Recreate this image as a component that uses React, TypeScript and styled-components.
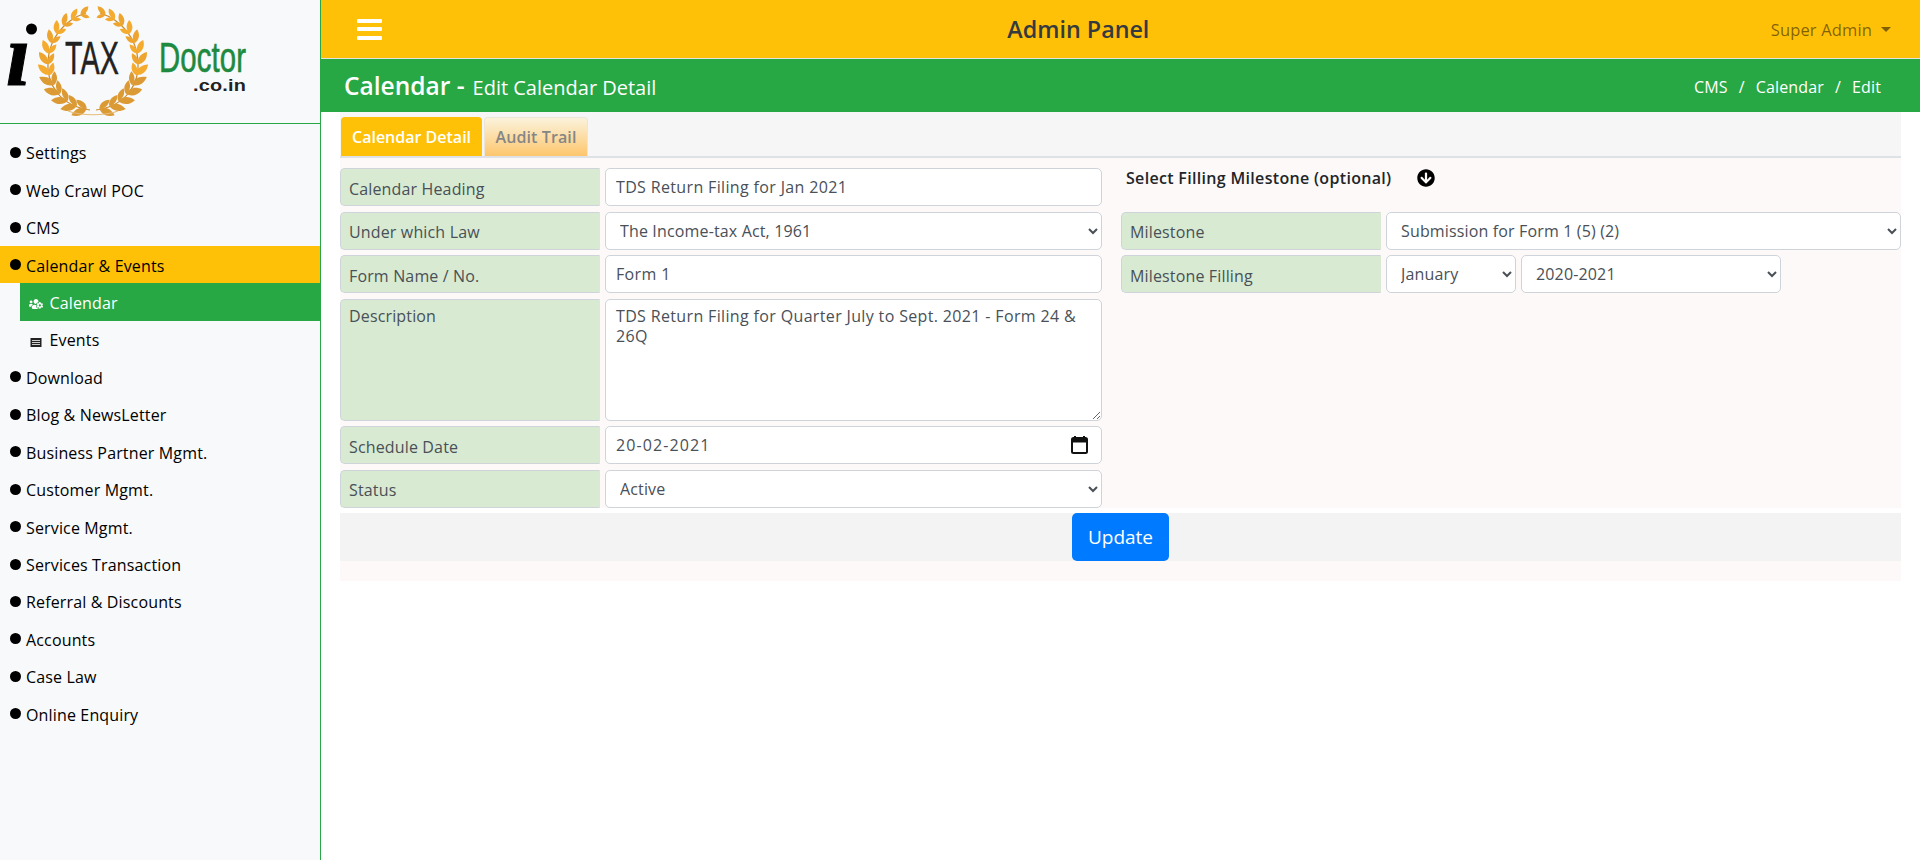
import React from 'react';
import styled, { createGlobalStyle } from 'styled-components';
import { FaArrowCircleDown, FaUsersCog } from 'react-icons/fa';

const FONT = `'Open Sans', 'Noto Sans', 'Liberation Sans', sans-serif`;

const GlobalStyle = createGlobalStyle`
  * { box-sizing: border-box; }
  html, body { margin: 0; background: #fff; }
  body { font-family: ${FONT}; font-size: 16px; letter-spacing: 0.15px; color: #212529; }
  input, select, textarea, button { font-family: ${FONT}; }
`;

const Shell = styled.div`
  display: grid;
  grid-template-columns: 321px 1fr;
  height: 860px;
  width: 1920px;
  overflow: hidden;
`;

const Sidebar = styled.aside`
  background: #f8f9fa;
  border-right: 1px solid #28a745;
`;

const LogoBox = styled.div`
  height: 124px;
  border-bottom: 1px solid #28a745;
  svg { display: block; }
`;

const Nav = styled.nav`
  padding-top: 9.5px;
`;

const NavRow = styled.div<{ $active?: boolean }>`
  height: 37.45px;
  display: flex;
  align-items: center;
  gap: 5px;
  padding: 2px 0 0 10px;
  color: #000;
  background: ${({ $active }) => ($active ? '#ffc107' : 'transparent')};
`;

const Dot = styled.span`
  width: 11px;
  height: 11px;
  border-radius: 50%;
  background: #000;
  margin-top: -2px;
`;

const SubRow = styled.div<{ $active?: boolean }>`
  height: 37.45px;
  margin-left: 20px;
  display: flex;
  align-items: center;
  gap: 6.5px;
  padding: 2px 0 0 9px;
  color: ${({ $active }) => ($active ? '#fff' : '#000')};
  background: ${({ $active }) => ($active ? '#28a745' : 'transparent')};
  svg { width: 14px; height: 14px; margin-top: 3px; flex: none; }
`;

const Main = styled.main`
  display: flex;
  flex-direction: column;
`;

const TopBar = styled.header`
  height: 59px;
  background: #ffc107;
  border-bottom: 1px solid #e2e2e2;
  display: flex;
  justify-content: space-between;
  align-items: center;
  padding: 0 29px 0 36px;
`;

const Burger = styled.div`
  width: 25px;
  display: flex;
  flex-direction: column;
  gap: 4.5px;
  span { height: 4px; background: #fff; border-radius: 1px; }
`;

const PanelTitle = styled.div`
  margin-left: 4px;
  font-size: 23.3px;
  font-weight: 600;
  letter-spacing: 0;
  color: #343a40;
`;

const UserMenu = styled.div`
  display: flex;
  align-items: center;
  gap: 9px;
  font-size: 16.5px;
  color: rgba(0, 0, 0, 0.5);
  &::after {
    content: '';
    border-top: 5px solid rgba(0, 0, 0, 0.5);
    border-left: 5px solid transparent;
    border-right: 5px solid transparent;
  }
`;

const TitleBar = styled.div`
  height: 53px;
  background: #28a745;
  color: #fff;
  display: flex;
  align-items: center;
  justify-content: space-between;
  padding: 0 39px 0 23px;
`;

const PageTitle = styled.div`
  display: flex;
  align-items: baseline;
  gap: 8px;
  font-size: 20px;
  letter-spacing: 0;
  strong { font-size: 24.5px; font-weight: 600; }
`;

const Crumbs = styled.div`
  display: flex;
  gap: 11px;
  padding-top: 2px;
`;

const Content = styled.div`
  margin: 0 19px;
`;

const TabStrip = styled.div`
  height: 46px;
  padding: 5px 0 0 1px;
  background: #f6f6f6;
  border-bottom: 2px solid #dee2e6;
  display: flex;
  gap: 2px;
`;

const Tab = styled.div<{ $active?: boolean }>`
  height: 39px;
  padding: 0 ${({ $active }) => ($active ? '10px' : '10.5px')};
  display: flex;
  align-items: center;
  font-weight: 600;
  letter-spacing: ${({ $active }) => ($active ? '0' : '0.1px')};
  border-radius: 4px 4px 0 0;
  color: ${({ $active }) => ($active ? '#fff' : '#868686')};
  background: ${({ $active }) => ($active ? '#ffc107' : 'linear-gradient(#fbf3dc, #fdc66d)')};
  border: 1px solid ${({ $active }) => ($active ? '#ffc107' : '#ebe6d8')};
  border-bottom: none;
`;

const Body = styled.div`
  background: #fdf9f8;
  padding-bottom: 20px;
`;

const Columns = styled.div`
  display: grid;
  grid-template-columns: 762px 780px;
  column-gap: 19px;
  padding-top: 10px;
`;

const Stack = styled.div`
  display: flex;
  flex-direction: column;
  gap: 5.7px;
`;

const Row = styled.div<{ $tall?: boolean }>`
  display: grid;
  grid-template-columns: 260px 1fr;
  gap: 5px;
  height: ${({ $tall }) => ($tall ? '121.5px' : '38px')};
`;

const Label = styled.div<{ $top?: boolean }>`
  background: #d8ead2;
  border: 1px solid #ced4da;
  border-right-color: #d8ead2;
  border-radius: 5px 0 0 5px;
  color: #495057;
  padding: ${({ $top }) => ($top ? '5px' : '8.5px')} 8px 0;
`;

const fieldCss = `
  width: 100%;
  height: 100%;
  border: 1px solid #ced4da;
  border-radius: 5px;
  background-color: #fff;
  color: #495057;
  font-size: 16px;
  letter-spacing: 0.15px;
  padding: 0 10px;
  outline: none;
  margin: 0;
`;

const Input = styled.input<{ $date?: boolean }>`
  ${fieldCss}
  letter-spacing: ${({ $date }) => ($date ? '1.1px' : '0.35px')};
`;

const Select = styled.select`${fieldCss}`;

const TextArea = styled.textarea`
  ${fieldCss}
  padding: 6px 10px;
  line-height: 20px;
  letter-spacing: 0.35px;
  display: block;
`;

const DateField = styled.div`
  position: relative;
  svg { position: absolute; right: 14px; top: 10px; }
`;

const MilestoneHead = styled.div`
  height: 38px;
  padding: 0 0 18px 5px;
  display: flex;
  align-items: center;
  gap: 25px;
  font-weight: 600;
  letter-spacing: 0.32px;
  color: #212529;
  svg { font-size: 18px; color: #000; }
`;

const FillingControls = styled.div`
  display: grid;
  grid-template-columns: 130px 260px;
  gap: 5px;
`;

const Footer = styled.div`
  margin-top: 5px;
  height: 48px;
  background: #f3f3f3;
  box-shadow: 0 -5px 0 #fff;
  display: flex;
  justify-content: center;
`;

const UpdateButton = styled.button`
  width: 97px;
  height: 48px;
  border: none;
  border-radius: 5px;
  background: #007bff;
  color: #fff;
  font-size: 19px;
`;

const LAURELS = Array.from({ length: 13 }, (_, i) => i);

// one side of the wreath, the other is its mirror image
const Branch = () => (
  <g>
    <path d="M96 110 C126 106 140 84 138 60 C136 38 122 20 100 13" fill="none" stroke="#c98a2a" strokeWidth="1.2" />
    {LAURELS.map((i) => {
      const deg = 82 - i * 13;
      const a = (deg * Math.PI) / 180;
      const x = 93 + 45 * Math.cos(a);
      const y = 61 + 48 * Math.sin(a);
      const fill = i < 5 ? '#dc9a35' : i % 2 ? '#f4ab2e' : '#eda52f';
      const size = i < 5 ? 1.05 : 1 - (i - 5) * 0.04;
      return (
        <g key={i} transform={`translate(${x} ${y}) scale(${size})`}>
          <path d="M0 0 C4 -4 5 -10 0 -16 C-5 -10 -4 -4 0 0Z" fill={fill} transform={`rotate(${deg + 32})`} />
          <path d="M0 0 C3 -3 4 -8 0 -13 C-4 -8 -3 -3 0 0Z" fill={fill} transform={`rotate(${deg - 32})`} />
        </g>
      );
    })}
  </g>
);

const Logo = () => (
  <svg width="320" height="123" viewBox="0 0 320 123">
    <circle cx="31.5" cy="29" r="5.5" fill="#000" />
    <text x="6" y="85" fontFamily="'Liberation Serif', serif" fontStyle="italic" fontWeight="700" fontSize="88" fill="#000" stroke="#000" strokeWidth="1">ı</text>
    <Branch />
    <g transform="translate(186 0) scale(-1 1)">
      <Branch />
    </g>
    <path d="M68 111 C82 116 104 116 118 111" fill="none" stroke="#e6bd7a" strokeWidth="1.2" />
    <text x="65" y="74" fontFamily="'Liberation Sans', sans-serif" fontSize="46" fill="#222" stroke="#222" strokeWidth=".5" textLength="54" lengthAdjust="spacingAndGlyphs">TAX</text>
    <text x="159" y="72" fontFamily="'Liberation Sans', sans-serif" fontSize="42" fill="#1d8a3f" stroke="#1d8a3f" strokeWidth=".6" textLength="87" lengthAdjust="spacingAndGlyphs">Doctor</text>
    <text x="193" y="91" fontFamily="'Liberation Sans', sans-serif" fontSize="16" fontWeight="700" fill="#222" textLength="53" lengthAdjust="spacingAndGlyphs">.co.in</text>
  </svg>
);

const CalendarGlyph = () => (
  <svg width="17" height="18" viewBox="0 0 17 18">
    <path d="M4 0v2M13 0v2" stroke="#111" strokeWidth="2" />
    <rect x="1" y="2" width="15" height="15" rx="1.5" fill="none" stroke="#111" strokeWidth="2" />
    <rect x="1" y="2" width="15" height="4.5" fill="#111" />
  </svg>
);

const TableGlyph = () => (
  <svg viewBox="0 0 14 14">
    <rect x="1.5" y="3" width="11" height="9" fill="#222" />
    <path d="M3 5.5h8M3 7.5h8M3 9.5h8" stroke="#ccc" strokeWidth="1" />
  </svg>
);

const NAV_TOP = ['Settings', 'Web Crawl POC', 'CMS'];
const NAV_BOTTOM = [
  'Download',
  'Blog & NewsLetter',
  'Business Partner Mgmt.',
  'Customer Mgmt.',
  'Service Mgmt.',
  'Services Transaction',
  'Referral & Discounts',
  'Accounts',
  'Case Law',
  'Online Enquiry',
];

const App: React.FC = () => (
  <Shell>
    <GlobalStyle />
    <Sidebar>
      <LogoBox>
        <Logo />
      </LogoBox>
      <Nav>
        {NAV_TOP.map((item) => (
          <NavRow key={item}><Dot />{item}</NavRow>
        ))}
        <NavRow $active><Dot />Calendar &amp; Events</NavRow>
        <SubRow $active><FaUsersCog />Calendar</SubRow>
        <SubRow><TableGlyph />Events</SubRow>
        {NAV_BOTTOM.map((item) => (
          <NavRow key={item}><Dot />{item}</NavRow>
        ))}
      </Nav>
    </Sidebar>
    <Main>
      <TopBar>
        <Burger><span /><span /><span /></Burger>
        <PanelTitle>Admin Panel</PanelTitle>
        <UserMenu>Super Admin</UserMenu>
      </TopBar>
      <TitleBar>
        <PageTitle><strong>Calendar -</strong>Edit Calendar Detail</PageTitle>
        <Crumbs>
          <span>CMS</span><span>/</span><span>Calendar</span><span>/</span><span>Edit</span>
        </Crumbs>
      </TitleBar>
      <Content>
        <TabStrip>
          <Tab $active>Calendar Detail</Tab>
          <Tab>Audit Trail</Tab>
        </TabStrip>
        <Body>
          <Columns>
            <Stack>
              <Row>
                <Label>Calendar Heading</Label>
                <Input defaultValue="TDS Return Filing for Jan 2021" />
              </Row>
              <Row>
                <Label>Under which Law</Label>
                <Select defaultValue="it"><option value="it">The Income-tax Act, 1961</option></Select>
              </Row>
              <Row>
                <Label>Form Name / No.</Label>
                <Input defaultValue="Form 1" />
              </Row>
              <Row $tall>
                <Label $top>Description</Label>
                <TextArea defaultValue="TDS Return Filing for Quarter July to Sept. 2021 - Form 24 & 26Q" />
              </Row>
              <Row>
                <Label>Schedule Date</Label>
                <DateField>
                  <Input $date defaultValue="20-02-2021" />
                  <CalendarGlyph />
                </DateField>
              </Row>
              <Row>
                <Label>Status</Label>
                <Select defaultValue="a"><option value="a">Active</option></Select>
              </Row>
            </Stack>
            <Stack>
              <MilestoneHead>
                Select Filling Milestone (optional)
                <FaArrowCircleDown />
              </MilestoneHead>
              <Row>
                <Label>Milestone</Label>
                <Select defaultValue="f"><option value="f">Submission for Form 1 (5) (2)</option></Select>
              </Row>
              <Row>
                <Label>Milestone Filling</Label>
                <FillingControls>
                  <Select defaultValue="jan"><option value="jan">January</option></Select>
                  <Select defaultValue="y"><option value="y">2020-2021</option></Select>
                </FillingControls>
              </Row>
            </Stack>
          </Columns>
          <Footer>
            <UpdateButton>Update</UpdateButton>
          </Footer>
        </Body>
      </Content>
    </Main>
  </Shell>
);

export default App;
